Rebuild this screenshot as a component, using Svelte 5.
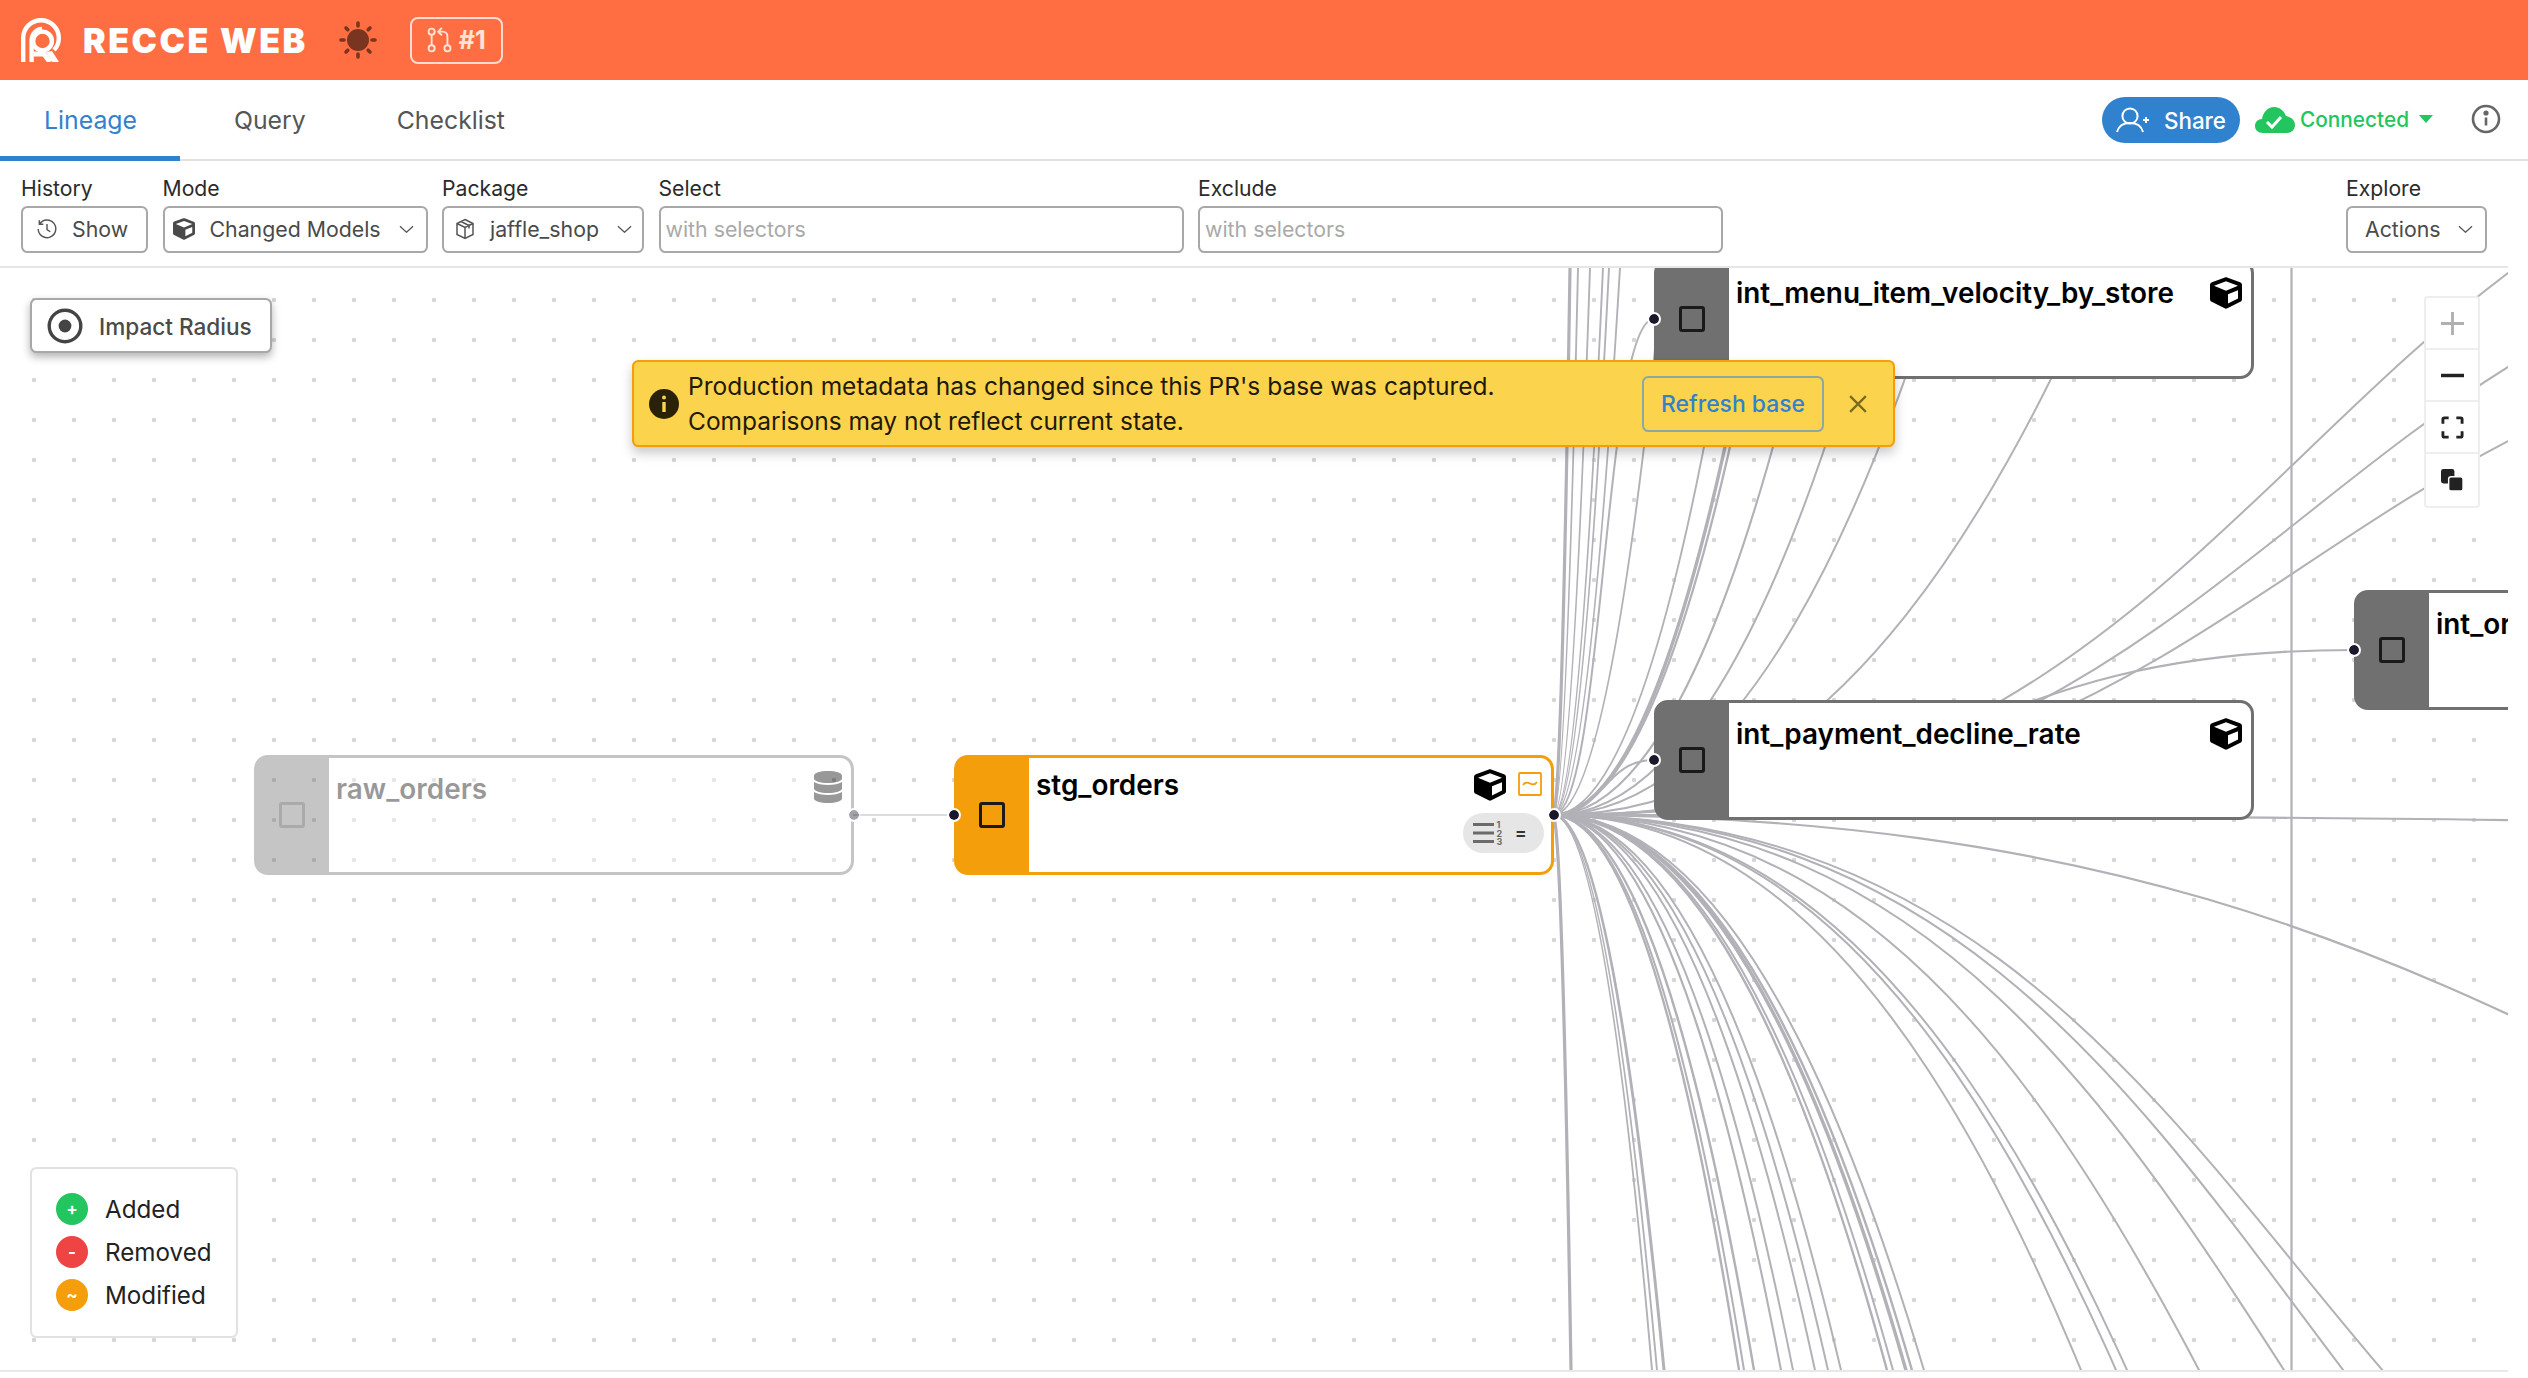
<script>
	const CUBE =
		'M239.1 6.3l-208 78c-18.7 7-31.1 25-31.1 45v225.1c0 18.2 10.3 34.8 26.5 42.9l208 104c13.5 6.8 29.4 6.8 42.9 0l208-104c16.3-8.1 26.5-24.8 26.5-42.9V129.3c0-20-12.4-37.9-31.1-44.9l-208-78C262 2.2 250 2.2 239.1 6.3zM256 68.4l192 72v1.1l-192 78-192-78v-1.1l192-72zm32 356V275.5l160-65v133.9l-160 80z';
	const DB =
		'M448 73.143v45.714C448 159.143 347.667 192 224 192S0 159.143 0 118.857V73.143C0 32.857 100.333 0 224 0s224 32.857 224 73.143zM448 176v102.857C448 319.143 347.667 352 224 352S0 319.143 0 278.857V176c48.125 33.143 136.208 48.572 224 48.572S399.874 209.143 448 176zm0 160v102.857C448 479.143 347.667 512 224 512S0 479.143 0 438.857V336c48.125 33.143 136.208 48.572 224 48.572S399.874 369.143 448 336z';

	const SX = 1553;
	const SY = 815;
	const f = (n) => n.toFixed(2);

	// react-flow style bezier from the stg_orders handle, with the far end
	// picked so the curve goes through (ex, ey). Only the part up to a bit past
	// that point is drawn, the far end can be millions of px away.
	const through = (ex, ey, D = 1502) => {
		const want = (ex - SX) / D;
		let lo = 0;
		let hi = 1;
		for (let i = 0; i < 50; i++) {
			const t = (lo + hi) / 2;
			if (1.5 * t * (1 - t) + t * t * t < want) lo = t;
			else hi = t;
		}
		const t = (lo + hi) / 2;
		const H = (ey - SY) / (3 * t * t - 2 * t * t * t);
		const T = Math.min(1, t * 1.3);
		// de Casteljau, in offsets from the source
		const c = D / 2;
		const p1x = c * T;
		const p2x = p1x + (c - p1x) * T;
		const p2y = H * T * T;
		const x = D * (1.5 * T * (1 - T) + T * T * T);
		const y = H * (3 * T * T - 2 * T * T * T);
		return `M${SX} ${SY} C${f(SX + p1x)} ${SY} ${f(SX + p2x)} ${f(SY + p2y)} ${f(SX + x)} ${f(SY + y)}`;
	};
	const toNode = (tx, ty) => {
		const m = (SX + tx) / 2;
		return `M${SX} ${SY} C${m} ${SY} ${m} ${ty} ${tx} ${ty}`;
	};

	const lower = [
		[1571, 3.2], [1652, 2], [1657, 2], [1664, 3], [1739, 2.4], [1744, 2], [1754, 2.4], [1781, 2],
		[1793, 2], [1815, 2], [1828, 2], [1841, 2], [1887, 2.4], [1893, 2], [1906, 3.4], [1912, 2.4],
		[1924, 2], [2081, 2], [2116, 2], [2127, 2], [2199, 2], [2284, 2], [2343, 2], [2382, 2]
	];
	const upper = [
		[1570, 268, 3.2], [1578, 268, 2], [1590, 268, 2], [1603, 268, 2], [1609, 268, 2], [1620, 268, 2],
		[1644, 447, 2], [1704, 447, 2], [1725, 447, 3.4], [1730, 447, 2.4], [1773, 447, 2], [1825, 447, 2],
		[1905, 379, 2], [2051, 379, 2], [2508, 273, 2], [2508, 367, 2], [2508, 441, 2]
	];
	const edges = [
		...lower.map(([x, w]) => ({ d: through(x, 1370), w })),
		...upper.map(([x, y, w]) => ({ d: through(x, y), w })),
		{ d: through(2508, 1014, 2202), w: 2.2 },
		{ d: through(2508, 820, 2202), w: 2.2 },
		{ d: toNode(1654, 319), w: 2 },
		{ d: toNode(1654, 760), w: 2 },
		{ d: toNode(2354, 650), w: 2.2 }
	];

	const nodes = [
		{ name: 'raw_orders', x: 254, y: 487, tone: 'faded', icon: 'db', right: true },
		{ name: 'stg_orders', x: 954, y: 487, tone: 'changed', icon: 'cube', left: true, right: true, changed: true },
		{ name: 'int_menu_item_velocity_by_store', x: 1654, y: -9, tone: 'plain', icon: 'cube', left: true },
		{ name: 'int_payment_decline_rate', x: 1654, y: 432, tone: 'plain', icon: 'cube', left: true },
		{ name: 'int_orders_enriched', x: 2354, y: 322, tone: 'plain', icon: 'cube', left: true }
	];

	const legend = [
		{ label: 'Added', sign: '+', color: '#22c55e' },
		{ label: 'Removed', sign: '-', color: '#ef4444' },
		{ label: 'Modified', sign: '~', color: '#f59e0b' }
	];
</script>

<div class="page">
	<header class="topbar">
		<svg class="logo" viewBox="0 0 40 44" fill="none" stroke="#fff" stroke-width="4.4">
			<path d="M2.2 44V20A17.8 17.8 0 0 1 20 2.2A17.8 17.8 0 0 1 37.8 20C37.8 25 36 29 33 32" />
			<path d="M10.6 44V22A10.5 11.5 0 0 1 21 11" />
			<circle cx="21.5" cy="23" r="9.4" />
			<path d="M12 36H23L29 44" stroke-width="5" />
			<path d="M25 34L31 44H38L31 33Z" fill="#fff" stroke="none" />
		</svg>
		<span class="brand">RECCE WEB</span>
		<svg class="sun" viewBox="0 0 38 38" fill="#7a3520" stroke="#7a3520" stroke-width="3.6" stroke-linecap="round">
			<circle cx="19" cy="19" r="11" stroke="none" />
			<path d="M19 2v3M19 33v3M2 19h3M33 19h3M7 7l1.8 1.8M29.2 29.2L31 31M7 31l1.8-1.8M29.2 8.8L31 7" />
		</svg>
		<div class="pr-badge">
			<svg viewBox="0 0 28 28" fill="none" stroke="currentColor" stroke-width="2">
				<circle cx="5" cy="5" r="3.3" />
				<circle cx="5" cy="23" r="3.3" />
				<circle cx="22" cy="23" r="3.3" />
				<path d="M5 8.5v11M22 19.500V10a5 5 0 0 0-5-5h-4M16 1l-4 4 4 4" />
			</svg>
			<span>#1</span>
		</div>
	</header>

	<nav class="tabs">
		<button class="tab active">Lineage</button>
		<button class="tab query">Query</button>
		<button class="tab checklist">Checklist</button>
		<div class="status">
			<button class="share">
				<svg viewBox="0 0 34 26" fill="none" stroke="currentColor" stroke-width="2">
					<circle cx="14" cy="9" r="7.6" />
					<path d="M1 25c1.500-6 6-9 13-9s11.500 3 13 9M27 13h6M30 10v6" />
				</svg>
				Share
			</button>
			<svg class="cloud" viewBox="0 0 40 26">
				<path d="M8 26C3 26 0 23 0 19C0 15 3 12 7 12C8 5 13 0 19 0C25 0 29 4 31 9C36 10 40 13 40 18C40 23 36 26 32 26Z" fill="#22c55e" />
				<path d="M12 15l5 5 9-10" fill="none" stroke="#fff" stroke-width="3" />
			</svg>
			<span class="connected">Connected</span>
			<span class="caret"></span>
			<svg class="info" viewBox="0 0 30 30" fill="none" stroke="#666" stroke-width="2.600">
				<circle cx="15" cy="15" r="13" />
				<path d="M15 13.500v8" />
				<circle cx="15" cy="9" r="1.300" fill="#666" />
			</svg>
		</div>
	</nav>

	<div class="main">
		<section class="toolbar">
			<div class="field">
				<span class="label">History</span>
				<button class="ctl show">
					<svg class="ico" viewBox="0 0 20 20" fill="none" stroke="#555" stroke-width="1.300">
						<path d="M3.300 5.500A8 8 0 1 1 2 10M3 2v3.700h3.700M10 5.500V10.500l3 2" />
					</svg>
					Show
				</button>
			</div>
			<div class="field">
				<span class="label">Mode</span>
				<button class="ctl mode">
					<svg class="ico" viewBox="0 0 512 512" fill="#4a4a4a"><path d={CUBE} /></svg>
					<span class="grow">Changed Models</span>
					<svg class="chev" viewBox="0 0 16 8" fill="none" stroke="#555" stroke-width="1.300"><path d="M1 1l7 6.500 7-6.500" /></svg>
				</button>
			</div>
			<div class="field">
				<span class="label">Package</span>
				<button class="ctl pkg">
					<svg class="ico" viewBox="0 0 20 22" fill="none" stroke="#555" stroke-width="1.500">
						<path d="M10 1.500l8 4v11l-8 4-8-4v-11zM2 5.500l8 4 8-4M10 9.500v11M6 3.500l8 4v3" />
					</svg>
					<span class="grow">jaffle_shop</span>
					<svg class="chev" viewBox="0 0 16 8" fill="none" stroke="#555" stroke-width="1.300"><path d="M1 1l7 6.500 7-6.500" /></svg>
				</button>
			</div>
			<div class="field">
				<span class="label">Select</span>
				<input class="ctl text" placeholder="with selectors" />
			</div>
			<div class="field">
				<span class="label">Exclude</span>
				<input class="ctl text" placeholder="with selectors" />
			</div>
			<div class="field explore">
				<span class="label">Explore</span>
				<button class="ctl actions">
					<span class="grow">Actions</span>
					<svg class="chev" viewBox="0 0 16 8" fill="none" stroke="#555" stroke-width="1.300"><path d="M1 1l7 6.500 7-6.500" /></svg>
				</button>
			</div>
		</section>

		<section class="canvas">
			<svg class="edges" viewBox="0 268 2508 1102" fill="none" stroke="#b1b1b7">
				<path d="M2291.500 268V1370" stroke-width="2.2" />
				<path d="M853 815H954" stroke="#dcdcdc" stroke-width="2" />
				{#each edges as edge}
					<path d={edge.d} stroke-width={edge.w} />
				{/each}
			</svg>

			{#each nodes as node}
				<div class="node {node.tone}" style="left: {node.x}px; top: {node.y}px">
					{#if node.left}<span class="handle in"></span>{/if}
					{#if node.right}<span class="handle out"></span>{/if}
					<div class="strip"><span class="check"></span></div>
					<div class="body">
						<div class="row">
							<span class="title">{node.name}</span>
							{#if node.icon === 'db'}
								<svg class="db" viewBox="0 0 448 512" fill="#000"><path d={DB} /></svg>
							{:else}
								<svg class="cube" viewBox="0 0 512 512" fill="#000"><path d={CUBE} /></svg>
							{/if}
							{#if node.changed}
								<svg class="delta" viewBox="0 0 24 24" fill="none" stroke="#f59e0b" stroke-width="1.800">
									<rect x="1" y="1" width="22" height="22" rx="1" />
									<path d="M5 13c2-3 4-3 7-1.500s5 1.500 7-1.500" />
								</svg>
							{/if}
						</div>
						{#if node.changed}
							<div class="stats">
								<svg viewBox="0 0 30 26" fill="#6b6b6b">
									<rect x="0" y="3" width="21" height="3" />
									<rect x="0" y="11.500" width="21" height="3" />
									<rect x="0" y="20" width="21" height="3" />
									<text x="23.500" y="8" class="num">1</text>
									<text x="23.500" y="16.500" class="num">2</text>
									<text x="23.500" y="25" class="num">3</text>
								</svg>
								<span class="eq">=</span>
							</div>
						{/if}
					</div>
				</div>
			{/each}

			<button class="impact">
				<svg viewBox="0 0 36 36" fill="none" stroke="#444" stroke-width="3.400">
					<circle cx="18" cy="18" r="15.800" />
					<circle cx="18" cy="18" r="6.400" fill="#444" stroke="none" />
				</svg>
				Impact Radius
			</button>

			<div class="alert">
				<svg class="alert-ico" viewBox="0 0 30 30">
					<circle cx="15" cy="15" r="15" fill="#2a2208" />
					<rect x="13.300" y="13" width="3.400" height="10" fill="#fcd34d" />
					<circle cx="15" cy="8.500" r="2" fill="#fcd34d" />
				</svg>
				<p>
					Production metadata has changed since this PR's base was captured.<br />
					Comparisons may not reflect current state.
				</p>
				<button class="refresh">Refresh base</button>
				<svg class="close" viewBox="0 0 16 16" fill="none" stroke="#7a6a20" stroke-width="2"><path d="M1 1l14 14M15 1L1 15" /></svg>
			</div>

			<div class="controls">
				<button>
					<svg viewBox="0 0 24 24" fill="none" stroke="#b0b0b0" stroke-width="3"><path d="M12 0v24M0 12h24" /></svg>
				</button>
				<button>
					<svg viewBox="0 0 24 24" fill="none" stroke="#222" stroke-width="3.600"><path d="M0 12h24" /></svg>
				</button>
				<button>
					<svg viewBox="0 0 24 24" fill="none" stroke="#222" stroke-width="3">
						<path d="M2 8V3.500A1.500 1.500 0 0 1 3.500 2H8M16 2h4.500A1.500 1.500 0 0 1 22 3.500V8M22 16v4.500A1.500 1.500 0 0 1 20.500 22H16M8 22H3.500A1.500 1.500 0 0 1 2 20.500V16" />
					</svg>
				</button>
				<button>
					<svg viewBox="0 0 24 24" fill="#222">
						<rect x="0" y="0" width="14" height="15" rx="2.500" />
						<rect x="8" y="8" width="15" height="15" rx="2.500" stroke="#fff" stroke-width="1.500" />
					</svg>
				</button>
			</div>

			<div class="legend">
				{#each legend as item}
					<div class="legend-row">
						<span class="dot" style="background: {item.color}">{item.sign}</span>
						{item.label}
					</div>
				{/each}
			</div>
		</section>
	</div>
</div>

<style>
	:global(body) {
		margin: 0;
		background: #fff;
	}

	.page {
		height: 1378px;
		display: flex;
		flex-direction: column;
		font-family: Inter, 'Noto Sans', sans-serif;
		color: #222;
		overflow: hidden;
	}

	button {
		font: inherit;
		background: none;
		border: none;
		padding: 0;
		cursor: pointer;
	}

	.topbar {
		height: 80px;
		flex: none;
		background: #ff6e42;
		display: flex;
		align-items: center;
		padding-left: 21px;
		color: #fff;
	}

	.logo {
		width: 40px;
		height: 44px;
	}

	.brand {
		margin-left: 22px;
		font-size: 34px;
		font-weight: 900;
		letter-spacing: 2.5px;
	}

	.sun {
		width: 38px;
		height: 38px;
		margin-left: 31px;
	}

	.pr-badge {
		margin-left: 33px;
		width: 93px;
		height: 47px;
		box-sizing: border-box;
		border: 2.5px solid #ffdccf;
		border-radius: 8px;
		display: flex;
		align-items: center;
		justify-content: center;
		gap: 6px;
		color: #ffe3d9;
		font-size: 25px;
		font-weight: 700;
	}

	.pr-badge svg {
		width: 26px;
		height: 26px;
	}

	.tabs {
		height: 81px;
		flex: none;
		box-sizing: border-box;
		border-bottom: 2px solid #e2e2e2;
		display: flex;
	}

	.tab {
		height: 81px;
		box-sizing: border-box;
		padding: 0 44px 2px;
		font-size: 24.8px;
		color: #555;
	}

	.tab.active {
		width: 180px;
		color: #3182ce;
		border-bottom: 5px solid #3182ce;
		padding-top: 5px;
	}

	.tab.query {
		margin-left: 10px;
	}

	.tab.checklist {
		margin-left: 3px;
	}

	.status {
		margin-left: auto;
		padding-right: 27px;
		display: flex;
		align-items: center;
		height: 78px;
	}

	.share {
		width: 138px;
		height: 46px;
		margin-top: 2px;
		border-radius: 23px;
		background: #3182ce;
		color: #fff;
		font-size: 22.4px;
		font-weight: 500;
		display: flex;
		align-items: center;
		justify-content: center;
		gap: 14px;
	}

	.share svg {
		width: 34px;
		height: 26px;
	}

	.cloud {
		width: 40px;
		height: 26px;
		margin: 2px 5px 0 15px;
	}

	.connected {
		color: #22c55e;
		font-size: 20.8px;
		font-weight: 500;
	}

	.caret {
		margin-left: 10px;
		border-left: 7.5px solid transparent;
		border-right: 7.5px solid transparent;
		border-top: 8px solid #22c55e;
	}

	.info {
		width: 30px;
		height: 30px;
		margin-left: 38px;
	}

	.main {
		width: 2508px;
		flex: 1;
		display: flex;
		flex-direction: column;
	}

	.toolbar {
		height: 107px;
		flex: none;
		box-sizing: border-box;
		padding: 14px 21px 0;
		border-bottom: 2px solid #e6e6e6;
		display: flex;
		gap: 14.5px;
	}

	.field {
		display: flex;
		flex-direction: column;
		gap: 5px;
	}

	.label {
		font-size: 21.2px;
		line-height: 26px;
		color: #2b2b2b;
	}

	.ctl {
		height: 47px;
		box-sizing: border-box;
		border: 2px solid #a8a8a8;
		border-radius: 6.400px;
		display: flex;
		align-items: center;
		padding-bottom: 2px;
		font-size: 21.3px;
		color: #4a4a4a;
		background: #fff;
	}

	.ico {
		width: 22px;
		height: 22px;
		flex: none;
	}

	.grow {
		flex: 1;
		text-align: left;
	}

	.chev {
		width: 15px;
		height: 8px;
		flex: none;
	}

	.show {
		width: 127px;
		padding-left: 13px;
		gap: 14px;
	}

	.mode {
		width: 265px;
		padding: 0 12px 2px 8px;
		gap: 15px;
	}

	.pkg {
		width: 202px;
		padding: 0 10px 2px 10px;
		gap: 14px;
	}

	.text {
		padding: 0 5px 2px;
		outline: none;
		font-family: inherit;
	}

	.field:nth-child(4) .text,
	.field:nth-child(5) .text {
		width: 525px;
	}

	.text::placeholder {
		color: #a9a9a9;
		opacity: 1;
	}

	.explore {
		margin-left: auto;
	}

	.actions {
		width: 141px;
		padding: 0 12px 2px 17px;
	}

	.canvas {
		position: relative;
		height: 1102px;
		flex: none;
		overflow: hidden;
		background-color: #fff;
		background-image: radial-gradient(circle at 20px 20px, #d6d6d6 2px, transparent 2.5px);
		background-size: 40px 40px;
		background-position: 14px 12px;
		border-bottom: 2px solid #e8e8e8;
	}

	.edges {
		position: absolute;
		inset: 0;
		width: 2508px;
		height: 1102px;
	}

	.node {
		position: absolute;
		width: 600px;
		height: 120px;
		box-sizing: border-box;
		border: 3.500px solid var(--tone);
		border-radius: 14px;
		background: #fff;
		display: flex;
		--tone: #707070;
	}

	.node.changed {
		--tone: #f59e0b;
	}

	.node.faded {
		opacity: 0.4;
	}

	.strip {
		width: 73px;
		box-sizing: border-box;
		padding-right: 2px;
		flex: none;
		margin: -1px 0 -1px -1px;
		background: var(--tone);
		border-radius: 10px 0 0 10px;
		display: flex;
		align-items: center;
		justify-content: center;
	}

	.check {
		width: 26px;
		height: 26px;
		box-sizing: border-box;
		border: 3px solid #1a1a1a;
		border-radius: 3px;
	}

	.node.faded .check {
		border-color: #000;
		opacity: 0.6;
	}

	.handle {
		position: absolute;
		top: 50%;
		width: 10px;
		height: 10px;
		margin-top: -5px;
		box-sizing: content-box;
		border-radius: 50%;
		background: #1a192b;
		outline: 2px solid #fff;
		z-index: 1;
	}

	.handle.in {
		left: -8px;
	}

	.handle.out {
		right: -8px;
	}

	.body {
		flex: 1;
		min-width: 0;
		padding: 11px 9px 0 7px;
		display: flex;
		flex-direction: column;
	}

	.row {
		display: flex;
		align-items: flex-start;
	}

	.title {
		flex: 1;
		font-size: 27.9px;
		line-height: 40px;
		font-weight: 600;
		color: #000;
		white-space: nowrap;
	}

	.changed .title {
		line-height: 32px;
	}

	.cube {
		width: 32px;
		height: 32px;
		margin-top: 4px;
		flex: none;
	}

	.changed .cube {
		margin-top: 0;
	}

	.db {
		width: 28px;
		height: 32px;
		margin-top: 2px;
		flex: none;
	}

	.delta {
		width: 24px;
		height: 24px;
		margin: 3px 0 0 12px;
		flex: none;
	}

	.stats {
		align-self: flex-end;
		margin: auto -2px 19.5px 0;
		width: 81px;
		height: 40px;
		border-radius: 20px;
		background: #e6e6e6;
		display: flex;
		align-items: center;
		padding-left: 10px;
		box-sizing: border-box;
		gap: 12px;
	}

	.stats svg {
		width: 30px;
		height: 26px;
	}

	.num {
		font-size: 9px;
		font-weight: 700;
		fill: #6b6b6b;
	}

	.eq {
		font-size: 17px;
		font-weight: 700;
		color: #333;
	}

	.impact {
		position: absolute;
		left: 30px;
		top: 30px;
		width: 242px;
		height: 55px;
		box-sizing: border-box;
		border: 2px solid #a8a8a8;
		border-radius: 6.400px;
		background: #fff;
		box-shadow: 0 4px 8px rgba(0, 0, 0, 0.3);
		display: flex;
		align-items: center;
		padding: 1px 0 0 15px;
		gap: 16px;
		font-size: 22.6px;
		font-weight: 500;
		color: #4a4a4a;
	}

	.impact svg {
		width: 36px;
		height: 36px;
	}

	.alert {
		position: absolute;
		left: 632px;
		top: 92px;
		width: 1263px;
		height: 87px;
		box-sizing: border-box;
		background: #fcd34d;
		border: 2px solid #f59e0b;
		border-radius: 6.400px;
		box-shadow: 0 6px 12px rgba(0, 0, 0, 0.22);
		display: flex;
		align-items: center;
		padding: 0 26px 0 15px;
		color: #1f1a08;
	}

	.alert-ico {
		width: 30px;
		height: 30px;
		flex: none;
	}

	.alert p {
		margin: 1px 0 0 9px;
		flex: 1;
		font-size: 24.5px;
		line-height: 35px;
	}

	.refresh {
		width: 182px;
		height: 56px;
		margin-top: 1px;
		border: 2px solid #8ca8a0;
		border-radius: 6.400px;
		color: #3182ce;
		font-size: 22.9px;
		font-weight: 500;
	}

	.close {
		width: 18px;
		height: 18px;
		margin-left: 25px;
	}

	.controls {
		position: absolute;
		left: 2424px;
		top: 28px;
		width: 56px;
		box-sizing: border-box;
		border: 2px solid #eee;
		border-radius: 4px;
		background: #fff;
		display: flex;
		flex-direction: column;
	}

	.controls button {
		height: 52px;
		display: flex;
		align-items: center;
		justify-content: center;
		border-bottom: 2px solid #eee;
	}

	.controls button:last-child {
		border-bottom: none;
	}

	.controls svg {
		width: 23px;
		height: 23px;
	}

	.legend {
		position: absolute;
		left: 30px;
		top: 899px;
		width: 208px;
		height: 171px;
		box-sizing: border-box;
		border: 2px solid #e2e2e2;
		border-radius: 6.400px;
		background: #fff;
		padding: 24px 0 0 24px;
		display: flex;
		flex-direction: column;
		gap: 11px;
		font-size: 24.2px;
		color: #222;
	}

	.legend-row {
		display: flex;
		align-items: center;
		gap: 17px;
		height: 32px;
	}

	.dot {
		width: 32px;
		height: 32px;
		border-radius: 50%;
		color: #fff;
		font-size: 17px;
		font-weight: 700;
		display: flex;
		align-items: center;
		justify-content: center;
	}
</style>
